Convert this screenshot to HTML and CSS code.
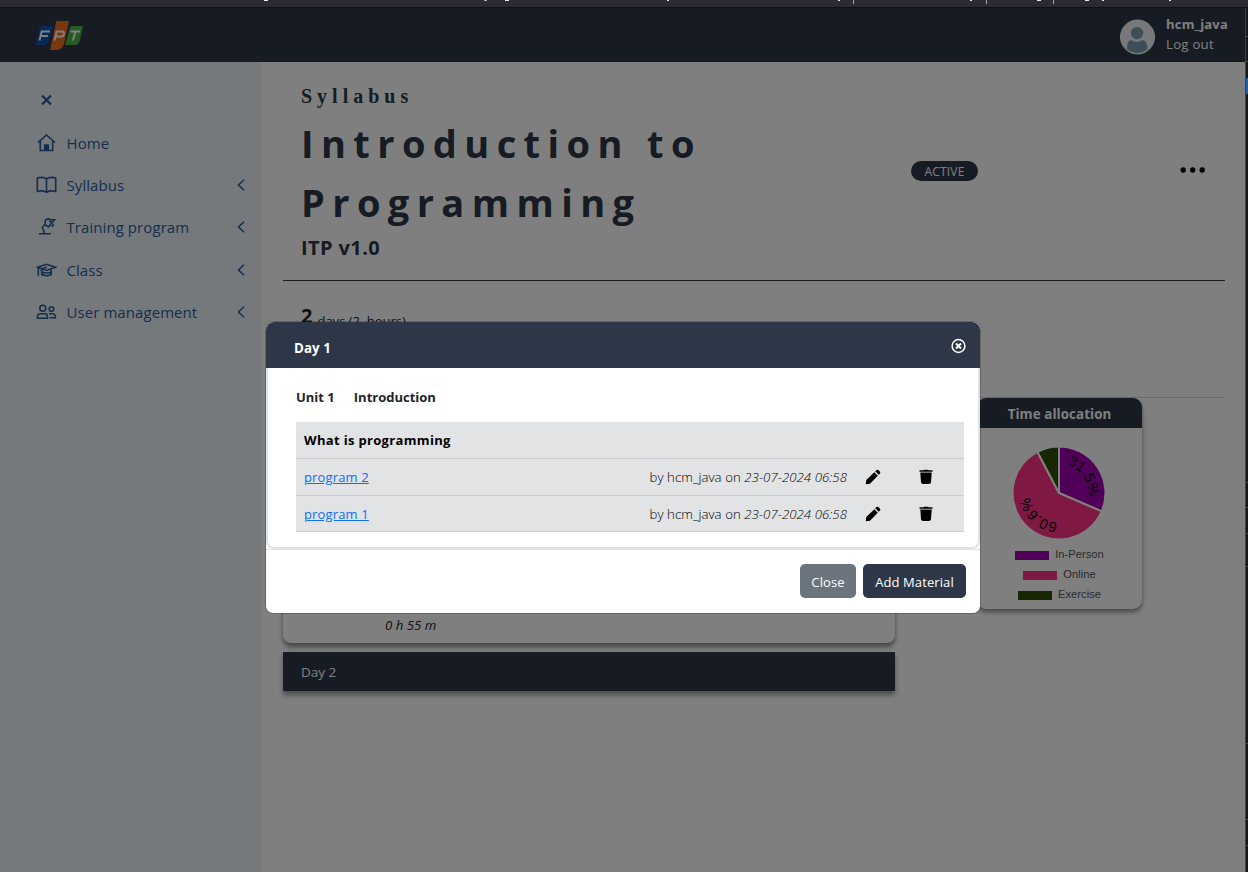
FILE: index.html
```html
<!DOCTYPE html>
<html lang="en">
<head>
<meta charset="utf-8">
<title>Syllabus</title>
<link rel="stylesheet" href="styles.css">
</head>
<body>
<svg class="browser-edge" width="1248" height="8"><path d="M0 7.5H1248" stroke="#0e0e13"/><path d="M853.500 0v4M986.500 0v4M1053.500 0v4" stroke="#a8a8ad"/><path d="M264 .5h4M484.500.5h2M505 .5h4M667 .5h2M838 .5h2M970 .5h2M1037 .5h4M1085 .5h4M1102 .5h2M1169 .5h2" stroke="#e9e9ee"/></svg>
<div class="window">
  <div class="app">
    <header class="topbar">
      <svg class="logo" width="48" height="32" viewBox="0 0 48 32">
        <path d="M6 6H17L13 20Q12 25 7 25H0L3 11Q4 6 6 6Z" fill="#0c56b0"/>
        <path d="M21 1H33L28 24Q26 30 20 30H14L19 7Q20 1 21 1Z" fill="#f36f21"/>
        <path d="M36 6H47L44 20Q43 25 38 25H29L33 11Q34 6 36 6Z" fill="#4bb648"/>
        <g fill="none" stroke="#fff" stroke-width="1.9"><path d="M3.500 20.500L5.700 11.500H14M4.700 16H12"/><path d="M18.500 20.500L20.700 11.500H26Q28.500 11.500 28 14Q27.500 16.500 25 16.500H20"/><path d="M34.500 11.500H44M39.300 11.500L37 20.500"/></g>
        <circle cx="45.500" cy="24" r="1" fill="#1c3f94"/>
      </svg>
      <div class="account">
        <svg width="35" height="36" viewBox="0 0 36 36"><circle cx="18" cy="18" r="17.500" fill="#eef0f3" stroke="#fff"/><circle cx="17.500" cy="14" r="6.400" fill="#7d9db3"/><path d="M7.500 31Q6.500 22 12 21.200Q17.500 25 23 21.200Q28.800 22 28 31Q18 38.500 7.500 31Z" fill="#7d9db3"/></svg>
        <div class="who"><b class="user">hcm_java</b><span class="logout">Log out</span></div>
      </div>
    </header>
    <div class="columns">
      <nav class="sidebar">
        <div class="item"><svg class="ico" viewBox="0 0 20 20"><path d="M5.500 5.500l9 9M14.500 5.500l-9 9" stroke-width="2.300"/></svg></div>
        <div class="item"><svg class="ico" viewBox="0 0 20 20"><path d="M1.500 9.500L10 2l8.500 7.500M3.800 8v9.500h12.400V8"/><path d="M8.200 17v-5h3.600v5z" fill="#285d9a"/></svg><span class="n1">Home</span></div>
        <div class="item"><svg class="ico" viewBox="0 0 20 20"><path d="M10 3.800Q5.500 1.500 .8 3V16.500Q5.500 15 10 17.200Q14.500 15 19.200 16.500V3Q14.500 1.500 10 3.800V17"/></svg><span class="n2">Syllabus</span><svg class="chev" viewBox="0 0 8 12"><path d="M7 .8L1.500 6L7 11.200"/></svg></div>
        <div class="item"><svg class="ico" viewBox="0 0 20 20"><path d="M2.500 16.700H14.500M8.200 16.500L5.800 10.300L8.800 7M8.800 7Q7.800 3 11 1.700Q12.300 1.500 13.300 2.800H18L12 9.800Q9.500 9.500 8.800 7ZM13 3.800L15.500 6.800M14.800 9.300Q17 9.300 16.800 6.700"/></svg><span class="n3">Training program</span><svg class="chev" viewBox="0 0 8 12"><path d="M7 .8L1.500 6L7 11.200"/></svg></div>
        <div class="item"><svg class="ico" viewBox="0 0 20 20"><path d="M1 7.200L10 4.300L19 7.200L10 10.500ZM1.800 8V15.800M5.200 9V14.500Q10 17 14.800 14.500V9M4.500 11Q5.500 7.800 10.500 7.200M5.500 12Q10 14 15 12"/></svg><span class="n4">Class</span><svg class="chev" viewBox="0 0 8 12"><path d="M7 .8L1.500 6L7 11.200"/></svg></div>
        <div class="item"><svg class="ico" viewBox="0 0 20 20"><circle cx="6.300" cy="6.300" r="3"/><circle cx="15" cy="7" r="2.300"/><path d="M1 16.200V14.500Q1 11.800 4 11.800H8.500Q11 11.800 11 14.500V16.200ZM12.500 11.800H16Q19 11.800 19 15.800H13.300"/></svg><span class="n5">User management</span><svg class="chev" viewBox="0 0 8 12"><path d="M7 .8L1.500 6L7 11.200"/></svg></div>
      </nav>
      <main class="content">
        <section class="heading">
          <div class="titles">
            <div class="kind">Syllabus</div>
            <h1 class="title">Introduction to<br>Programming</h1>
            <div class="code">ITP v1.0</div>
          </div>
          <div class="badge">ACTIVE</div>
          <svg class="dots" width="26" height="8"><circle cx="3.200" cy="4" r="2.700"/><circle cx="12.700" cy="4" r="2.700"/><circle cx="22.200" cy="4" r="2.700"/></svg>
        </section>
        <section class="duration"><b>2</b><span>days (2&nbsp; hours)</span></section>
        <section class="outline">
          <div class="days">
            <div class="day-card"><i>0 h 55 m</i></div>
            <div class="day-bar">Day 2</div>
          </div>
          <aside class="time">
            <div class="time-head">Time allocation</div>
            <svg class="pie" width="100" height="100" viewBox="-50 -50 100 100">
              <g stroke="#fff" stroke-width="2"><path d="M0 0V-46.500A46.500 46.500 0 0 1 42.700 18.400Z" fill="#a300b5"/><path d="M0 0L42.700 18.400A46.500 46.500 0 1 1 -21.600 -41.200Z" fill="#ff3187"/><path d="M0 0L-21.600 -41.200A46.500 46.500 0 0 1 0 -46.500Z" fill="#2c4e05"/></g>
              <path id="ring" d="M0 -29.500A29.500 29.500 0 0 1 0 29.500A29.500 29.500 0 0 1 0 -29.500" fill="none"/>
              <text class="share"><textPath href="#ring" startOffset="29">31.5%</textPath></text>
              <text class="share"><textPath href="#ring" startOffset="114.500">60.6%</textPath></text>
            </svg>
            <div class="legend"><span class="swatch person"></span><span class="label">In-Person</span></div>
            <div class="legend"><span class="swatch online"></span><span class="label">Online</span></div>
            <div class="legend"><span class="swatch exercise"></span><span class="label">Exercise</span></div>
          </aside>
        </section>
      </main>
    </div>
    <div class="backdrop"></div>
  </div>
  <svg class="side-edge" width="3" height="864"><path d="M.5 0V864" stroke="#42414b"/><path d="M0 28.500h3M0 53.500h3M0 474.500h3M0 499.500h3M0 525.500h3M0 558.500h3M0 735.500h3M0 811.500h3M0 837.500h3" stroke="#44434c"/><path d="M1 70h2v16h-2z" fill="#1f5fae"/></svg>
</div>
<div class="modal">
  <div class="modal-head"><b class="day">Day 1</b><svg width="16" height="16" viewBox="0 0 16 16" fill="none" stroke="#fff"><circle cx="8.500" cy="8" r="6.400" stroke-width="1.500"/><path d="M6 5.500l5 5M11 5.500l-5 5" stroke-width="1.900"/></svg></div>
  <div class="modal-body">
    <div class="unit"><b class="u1">Unit 1</b><b class="u2">Introduction</b></div>
    <div class="table">
      <div class="row"><b class="topic">What is programming</b></div>
      <div class="row"><a class="link">program 2</a><span class="by">by hcm_java on <i>23-07-2024 06:58</i></span><svg class="pencil" viewBox="0 0 16 16"><path d="M.8 15.200L1.300 11L9.300 3.200L12.800 6.700L5 14.700ZM10.200 2.300L11.700 1Q12.600.3 13.400 1.100L15 2.700Q15.700 3.600 15 4.400L13.700 5.800Z"/></svg><svg class="trash" viewBox="0 0 14 16"><path d="M.5 1.300H4.500L5 .8H9L9.500 1.300H13.500V2.800H.5ZM1.300 3.500H12.700L12 13.200Q11.800 15 10 15H4Q2.200 15 2 13.200Z"/></svg></div>
      <div class="row"><a class="link">program 1</a><span class="by">by hcm_java on <i>23-07-2024 06:58</i></span><svg class="pencil" viewBox="0 0 16 16"><path d="M.8 15.200L1.300 11L9.300 3.200L12.800 6.700L5 14.700ZM10.200 2.300L11.700 1Q12.600.3 13.400 1.100L15 2.700Q15.700 3.600 15 4.400L13.700 5.800Z"/></svg><svg class="trash" viewBox="0 0 14 16"><path d="M.5 1.300H4.500L5 .8H9L9.500 1.300H13.500V2.800H.5ZM1.300 3.500H12.700L12 13.200Q11.800 15 10 15H4Q2.200 15 2 13.200Z"/></svg></div>
    </div>
  </div>
  <div class="modal-foot"><button class="btn close"><span>Close</span></button><button class="btn add"><span>Add Material</span></button></div>
</div>
</body>
</html>
```
FILE: styles.css
```css
* { box-sizing: border-box; }
body { margin: 0; width: 1248px; height: 872px; overflow: hidden; position: relative; font-family: "Open Sans", "Noto Sans", sans-serif; color: #212529; white-space: nowrap; }
svg { display: block; flex: none; }
.browser-edge { background: #2b2a33; }
.window { display: flex; height: 864px; }
.app { position: relative; width: 1245px; height: 864px; background: #fff; display: flex; flex-direction: column; }
.side-edge { background: #18181b; }
.backdrop { position: absolute; inset: 0; background: rgba(0, 0, 0, .5); }

.topbar { height: 54px; background: #2d3748; display: flex; justify-content: space-between; padding: 0 16px 0 36px; }
.logo { margin-top: 12px; }
.account { display: flex; gap: 11px; padding-top: 11px; color: #fff; width: 109px; }
.who { display: flex; flex-direction: column; line-height: 20px; margin-top: -5px; }
.user { font-size: 13px; letter-spacing: .2px; }
.logout { font-size: 13.200px; letter-spacing: .25px; }

.columns { display: flex; flex: 1; min-height: 0; }
.sidebar { width: 261px; background: #ebf3f8; padding: 17.300px 16px 0 36px; color: #285d9a; }
.item { display: flex; align-items: center; height: 42.300px; font-size: 15px; gap: 9.500px; letter-spacing: .07px; }
.ico { width: 21px; height: 20px; fill: none; stroke: #285d9a; stroke-width: 1.600; }
.chev { width: 8px; height: 12px; margin-left: auto; fill: none; stroke: #285d9a; stroke-width: 1.500; }

.content { flex: 1; padding-left: 22px; }
.heading { width: 942px; height: 219px; border-bottom: 1px solid #2d3748; display: flex; padding-left: 18px; color: #2d3748; }
.titles { width: 610px; padding-top: 20px; }
.kind { font: bold 20px/28px "Liberation Serif", serif; letter-spacing: 5px; }
.title { margin: 4px 0 0; font-size: 38px; line-height: 59.300px; letter-spacing: 7.400px; }
.code { font-size: 20px; font-weight: 700; line-height: 29px; letter-spacing: .4px; }
.badge { margin-top: 99px; width: 67px; height: 20px; border-radius: 10px; background: #2d3748; color: #fff; text-align: center; font-size: 12px; line-height: 21px; letter-spacing: .2px; }
.dots { margin: 104px 0 0 202px; }
.duration { width: 942px; height: 117px; border-bottom: 1px solid #d5d7da; padding: 21px 18px 0; display: flex; align-items: baseline; gap: 5px; font-size: 13px; }
.duration b { font-size: 20px; }
.duration span { position: relative; top: 3px; }
.outline { display: flex; }
.days { width: 612px; margin-right: 82px; }
.day-card { height: 245px; border-radius: 8px; box-shadow: 0 4px 5px rgba(0, 0, 0, .45); padding: 217px 0 0 102px; font-size: 13.200px; line-height: 20px; }
.day-bar { margin-top: 9px; height: 39px; background: #2d3748; color: #fff; padding-left: 18px; font-size: 13.500px; line-height: 40px; box-shadow: 0 4px 5px rgba(0, 0, 0, .4); }
.time { width: 165px; height: 211px; border-radius: 9px; box-shadow: 0 3px 5px rgba(0, 0, 0, .45); overflow: hidden; display: flex; flex-direction: column; align-items: center; }
.time-head { width: 165px; height: 30px; background: #2d3748; color: #fff; text-align: center; font-weight: 700; font-size: 13.300px; line-height: 32px; letter-spacing: .1px; }
.pie { margin: 15px 1.500px 1px 0; }
.share { font: 14.500px "Liberation Sans", sans-serif; fill: #000; text-anchor: middle; }
.legend { display: flex; align-items: center; gap: 6px; height: 20px; font: 11.200px "Liberation Sans", sans-serif; color: #555; }
.swatch { width: 34px; height: 9px; margin-top: 2px; }
.person { background: #a300b5; }
.online { background: #ff3187; }
.exercise { background: #2c4e05; }

.modal { position: absolute; left: 266px; top: 322px; width: 714px; height: 291px; background: #fff; border-radius: 7px; box-shadow: 0 0 0 1px rgba(0, 0, 0, .2); }
.modal-head { height: 46px; background: #2d3748; color: #fff; border-radius: 8px 8px 0 0; display: flex; justify-content: space-between; padding: 16px 14px 0 28px; font-size: 13.300px; line-height: 20px; }
.day { line-height: 21px; letter-spacing: .1px; }
.modal-body { height: 181px; border: solid #dee2e6; border-width: 0 2px 2px; border-radius: 0 0 8px 8px; padding: 19px 14px 0 28px; }
.unit { display: flex; gap: 19px; font-size: 13px; line-height: 20px; margin-bottom: 15px; }
.table { background: #e2e3e5; color: #000; }
.row { height: 37px; border-bottom: 1px solid #cbccce; display: flex; align-items: center; padding: 0 31px 0 8px; font-size: 13px; }
.row:last-child { height: 36px; }
.topic { letter-spacing: .33px; }
.link { color: #0d6efd; text-decoration: underline; letter-spacing: .15px; }
.by { margin-left: auto; font-size: 13.200px; font-weight: 300; letter-spacing: .06px; }
.pencil { width: 16px; height: 16px; margin-left: 17.500px; margin-right: .5px; }
.trash { width: 14px; height: 16px; margin-left: 38px; }
.modal-foot { height: 64px; border-top: 1px solid #dee2e6; display: flex; justify-content: flex-end; gap: 7px; padding: 14px 14px 0; }
.btn { border: 0; border-radius: 5px; height: 34px; color: #fff; font: 13px/34px "Open Sans", sans-serif; padding: 1px 0 0; letter-spacing: .1px; }
.close { width: 56px; background: #6c757d; }
.add { width: 103px; background: #2d3748; }
```
